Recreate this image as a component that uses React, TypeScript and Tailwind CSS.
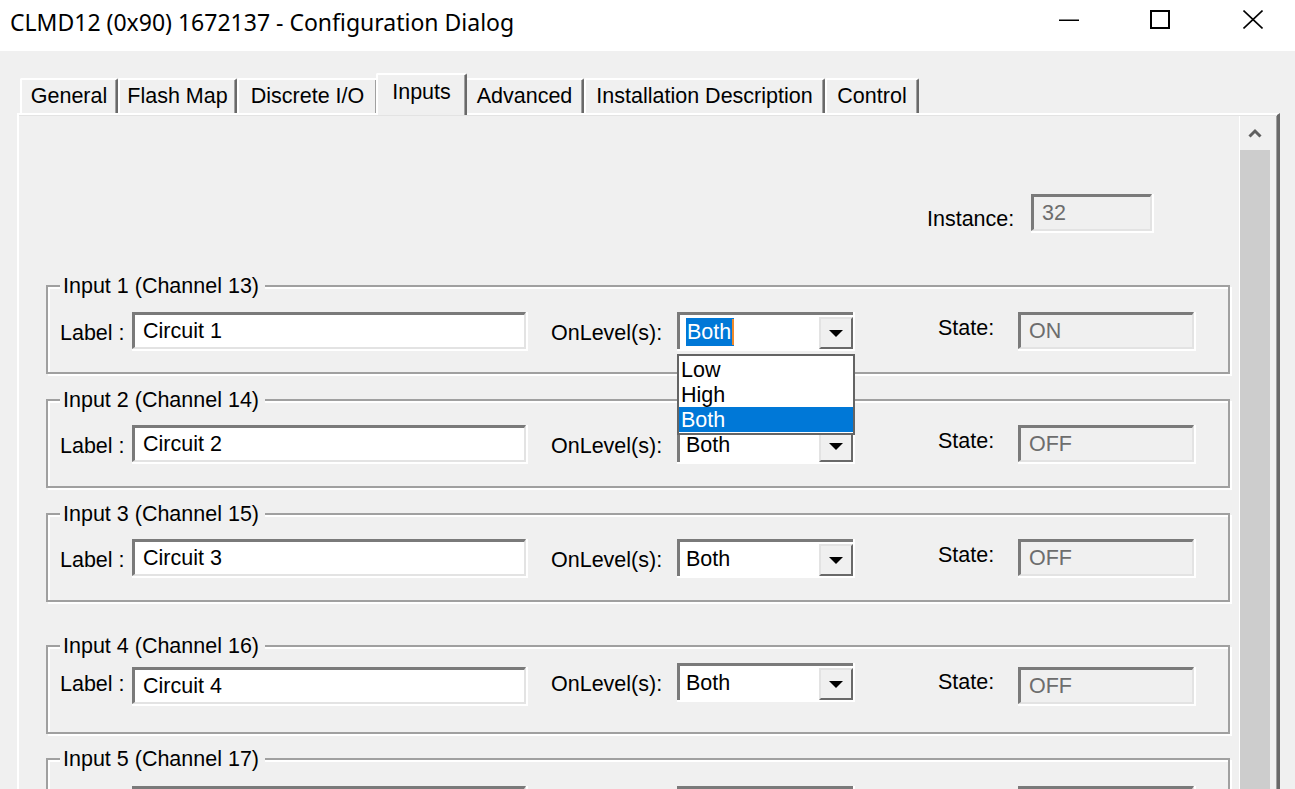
import React from "react";

function TextBox({ value, w, disabled, mt }: { value: string; w: string; disabled?: boolean; mt: string }) {
  return (
    <div className={`${w} ${mt} h-[39px] shrink-0 border-r-2 border-b-2 border-white`}>
      <div
        className={`h-full w-full flex items-center pl-[8px] pt-[2px] leading-none border-t-[3px] border-l-[3px] border-r-2 border-b-2 border-t-[#7a7a7a] border-l-[#7a7a7a] border-r-[#e3e3e3] border-b-[#e3e3e3] ${
          disabled ? "bg-[#f0f0f0] text-[#6d6d6d]" : "bg-white text-black"
        }`}
      >
        {value}
      </div>
    </div>
  );
}

function Combo({ value, selected, open, mt }: { value: string; selected?: boolean; open?: boolean; mt: string }) {
  return (
    <div className={`relative ${mt} w-[178px] h-[39px] shrink-0 border-r-2 border-b-2 border-white`}>
      <div className="h-full w-full flex border-t-[3px] border-l-[3px] border-[#7a7a7a] border-r-0 border-b-0 bg-white pt-[2px]">
        <div className="flex-1 flex items-center pl-[6px]">
          {selected ? (
            <span className="flex items-center h-[28px] bg-[#0078d7] text-white pl-[1px] leading-none -mt-[2px]">
              <span className="pt-[2px]">{value}</span>
              <span className="ml-[1px] w-[2px] h-[26px] bg-[#f08a2c]" />
            </span>
          ) : (
            <span className="leading-none">{value}</span>
          )}
        </div>
        <div className="w-[34px] flex items-center justify-center bg-[#f0f0f0] border-t-2 border-l-2 border-r-2 border-b-2 border-t-[#e3e3e3] border-l-[#e3e3e3] border-r-[#696969] border-b-[#696969]">
          <svg width="14" height="7" viewBox="0 0 14 7">
            <path d="M0 0 H14 L7 7 Z" fill="#000" />
          </svg>
        </div>
      </div>
      {open && (
        <div className="absolute left-0 top-[42px] z-20 w-[178px] h-[81px] border-2 border-[#646464] bg-white pt-[1px]">
          <div className="h-[25px] leading-[26px] pl-[2px]">Low</div>
          <div className="h-[25px] leading-[26px] pl-[2px]">High</div>
          <div className="h-[25px] leading-[26px] pl-[2px] bg-[#0078d7] text-white">Both</div>
        </div>
      )}
    </div>
  );
}

type GroupProps = {
  title: string;
  label: string;
  combo: string;
  state: string;
  pt: string;
  mt: string;
  tbMt: string;
  cbMt: string;
  sbMt: string;
  lblMt: string;
  stMt: string;
  selected?: boolean;
  open?: boolean;
  hideRow?: boolean;
};

function Group(p: GroupProps) {
  return (
    <div
      className={`relative shrink-0 ${p.mt} w-[1184px] h-[89px] border-2 border-[#a0a0a0] shadow-[inset_2px_2px_0_#fff,2px_2px_0_#fff] ${p.pt}`}
    >
      <div className="absolute left-[12px] -top-[12px] bg-[#f0f0f0] pl-[3px] pr-[6px] leading-[22px]">{p.title}</div>
      <div className="flex items-start pl-[12px]">
        <div className={`w-[72px] shrink-0 leading-[22px] ${p.lblMt}`}>{p.hideRow ? "" : "Label :"}</div>
        <TextBox value={p.label} w="w-[396px]" mt={p.tbMt} />
        <div className={`ml-[23px] w-[126px] shrink-0 leading-[22px] ${p.lblMt}`}>{p.hideRow ? "" : "OnLevel(s):"}</div>
        <Combo value={p.combo} selected={p.selected} open={p.open} mt={p.cbMt} />
        <div className={`ml-[83px] w-[80px] shrink-0 leading-[22px] ${p.stMt}`}>{p.hideRow ? "" : "State:"}</div>
        <TextBox value={p.state} w="w-[178px]" disabled mt={p.sbMt} />
      </div>
    </div>
  );
}

function Tab({ label, w, active }: { label: string; w: string; active?: boolean }) {
  if (active) {
    return (
      <div
        className={`relative z-10 ${w} -mx-[2px] -mb-[2px] h-[42px] shrink-0 bg-[#f0f0f0] border-t-2 border-l-2 border-r-2 border-t-white border-l-white border-r-[#696969] shadow-[inset_-1px_0_0_#a0a0a0] rounded-t-[2px] pt-[6px] text-center leading-[22px]`}
      >
        {label}
      </div>
    );
  }
  return (
    <div
      className={`${w} h-[35px] shrink-0 bg-[#f0f0f0] border-t-2 border-l-2 border-r-2 border-t-white border-l-white border-r-[#696969] shadow-[inset_-1px_0_0_#a0a0a0] rounded-t-[2px] pt-[5px] text-center leading-[22px]`}
    >
      {label}
    </div>
  );
}

export default function App() {
  return (
    <div className="w-[1295px] h-[789px] overflow-hidden bg-[#f0f0f0] flex flex-col font-['Liberation_Sans',Arial,sans-serif] text-[21.5px] text-black">
      {/* Title bar */}
      <div className="h-[51px] shrink-0 bg-white flex items-start">
        <div className="pl-[10px] pt-[11px] font-['Noto_Sans',sans-serif] text-[23px] leading-[23px] text-black whitespace-nowrap">
          CLMD12 (0x90) 1672137 - Configuration Dialog
        </div>
        <div className="ml-auto flex items-start pr-[32px] pt-[10px]">
          <svg width="20" height="20" viewBox="0 0 20 20">
            <line x1="0" y1="10.25" x2="20" y2="10.25" stroke="#000" strokeWidth="1.5" />
          </svg>
          <svg width="20" height="19" viewBox="0 0 20 19" className="ml-[71px]">
            <rect x="1" y="1" width="18" height="17" fill="none" stroke="#000" strokeWidth="2" />
          </svg>
          <svg width="20" height="19" viewBox="0 0 20 19" className="ml-[73px]">
            <line x1="0.5" y1="0.5" x2="19.5" y2="18.5" stroke="#000" strokeWidth="1.6" />
            <line x1="19.5" y1="0.5" x2="0.5" y2="18.5" stroke="#000" strokeWidth="1.6" />
          </svg>
        </div>
      </div>

      {/* Tabs */}
      <div className="h-[62px] shrink-0 flex items-end pl-[20px]">
        <Tab label="General" w="w-[98px]" />
        <Tab label="Flash Map" w="w-[119px]" />
        <Tab label="Discrete I/O" w="w-[141px]" />
        <Tab label="Inputs" w="w-[91px]" active />
        <Tab label="Advanced" w="w-[119px]" />
        <Tab label="Installation Description" w="w-[241px]" />
        <Tab label="Control" w="w-[94px]" />
      </div>

      {/* Panel */}
      <div className="ml-[17px] w-[1263px] flex-1 min-h-0 flex border-t-2 border-l-2 border-r-[3px] border-t-white border-l-white border-r-[#696969] shadow-[inset_-1px_0_0_#a0a0a0]">
        <div className="flex-1 min-h-0 flex border-t border-[#e3e3e3]">
          {/* content */}
          <div className="w-[1220px] shrink-0 flex flex-col pl-[27px] overflow-hidden">
            <div className="mt-[78px] flex items-start ml-[881px] shrink-0">
              <div className="w-[104px] shrink-0 mt-[14px] leading-[22px]">Instance:</div>
              <TextBox value="32" w="w-[123px]" disabled mt="mt-0" />
            </div>

            <Group
              title="Input 1 (Channel 13)"
              label="Circuit 1"
              combo="Both"
              state="ON"
              mt="mt-[52px]"
              pt="pt-[25px]"
              tbMt="mt-0"
              cbMt="mt-0"
              sbMt="mt-0"
              lblMt="mt-[10px]"
              stMt="mt-[5px]"
              selected
              open
            />
            <Group
              title="Input 2 (Channel 14)"
              label="Circuit 2"
              combo="Both"
              state="OFF"
              mt="mt-[25px]"
              pt="pt-[24px]"
              tbMt="mt-0"
              cbMt="mt-0"
              sbMt="mt-0"
              lblMt="mt-[10px]"
              stMt="mt-[5px]"
            />
            <Group
              title="Input 3 (Channel 15)"
              label="Circuit 3"
              combo="Both"
              state="OFF"
              mt="mt-[25px]"
              pt="pt-[24px]"
              tbMt="mt-0"
              cbMt="mt-0"
              sbMt="mt-0"
              lblMt="mt-[10px]"
              stMt="mt-[5px]"
            />
            <Group
              title="Input 4 (Channel 16)"
              label="Circuit 4"
              combo="Both"
              state="OFF"
              mt="mt-[43px]"
              pt="pt-[16px]"
              tbMt="mt-[4px]"
              cbMt="mt-0"
              sbMt="mt-[4px]"
              lblMt="mt-[10px]"
              stMt="mt-[8px]"
            />
            <Group
              title="Input 5 (Channel 17)"
              label=""
              combo=""
              state=""
              mt="mt-[24px]"
              pt="pt-[26px]"
              tbMt="mt-0"
              cbMt="mt-0"
              sbMt="mt-0"
              lblMt="mt-[10px]"
              stMt="mt-[5px]"
              hideRow
            />
          </div>

          {/* scrollbar */}
          <div className="w-[37px] shrink-0 border-l border-white flex flex-col">
            <div className="w-[30px] h-[34px] shrink-0 flex items-center justify-center">
              <svg width="14" height="10" viewBox="0 0 14 10">
                <polyline points="1.5,8.5 7,3 12.5,8.5" fill="none" stroke="#606060" strokeWidth="3" />
              </svg>
            </div>
            <div className="w-[30px] flex-1 bg-[#cdcdcd]" />
          </div>
        </div>
      </div>
    </div>
  );
}
